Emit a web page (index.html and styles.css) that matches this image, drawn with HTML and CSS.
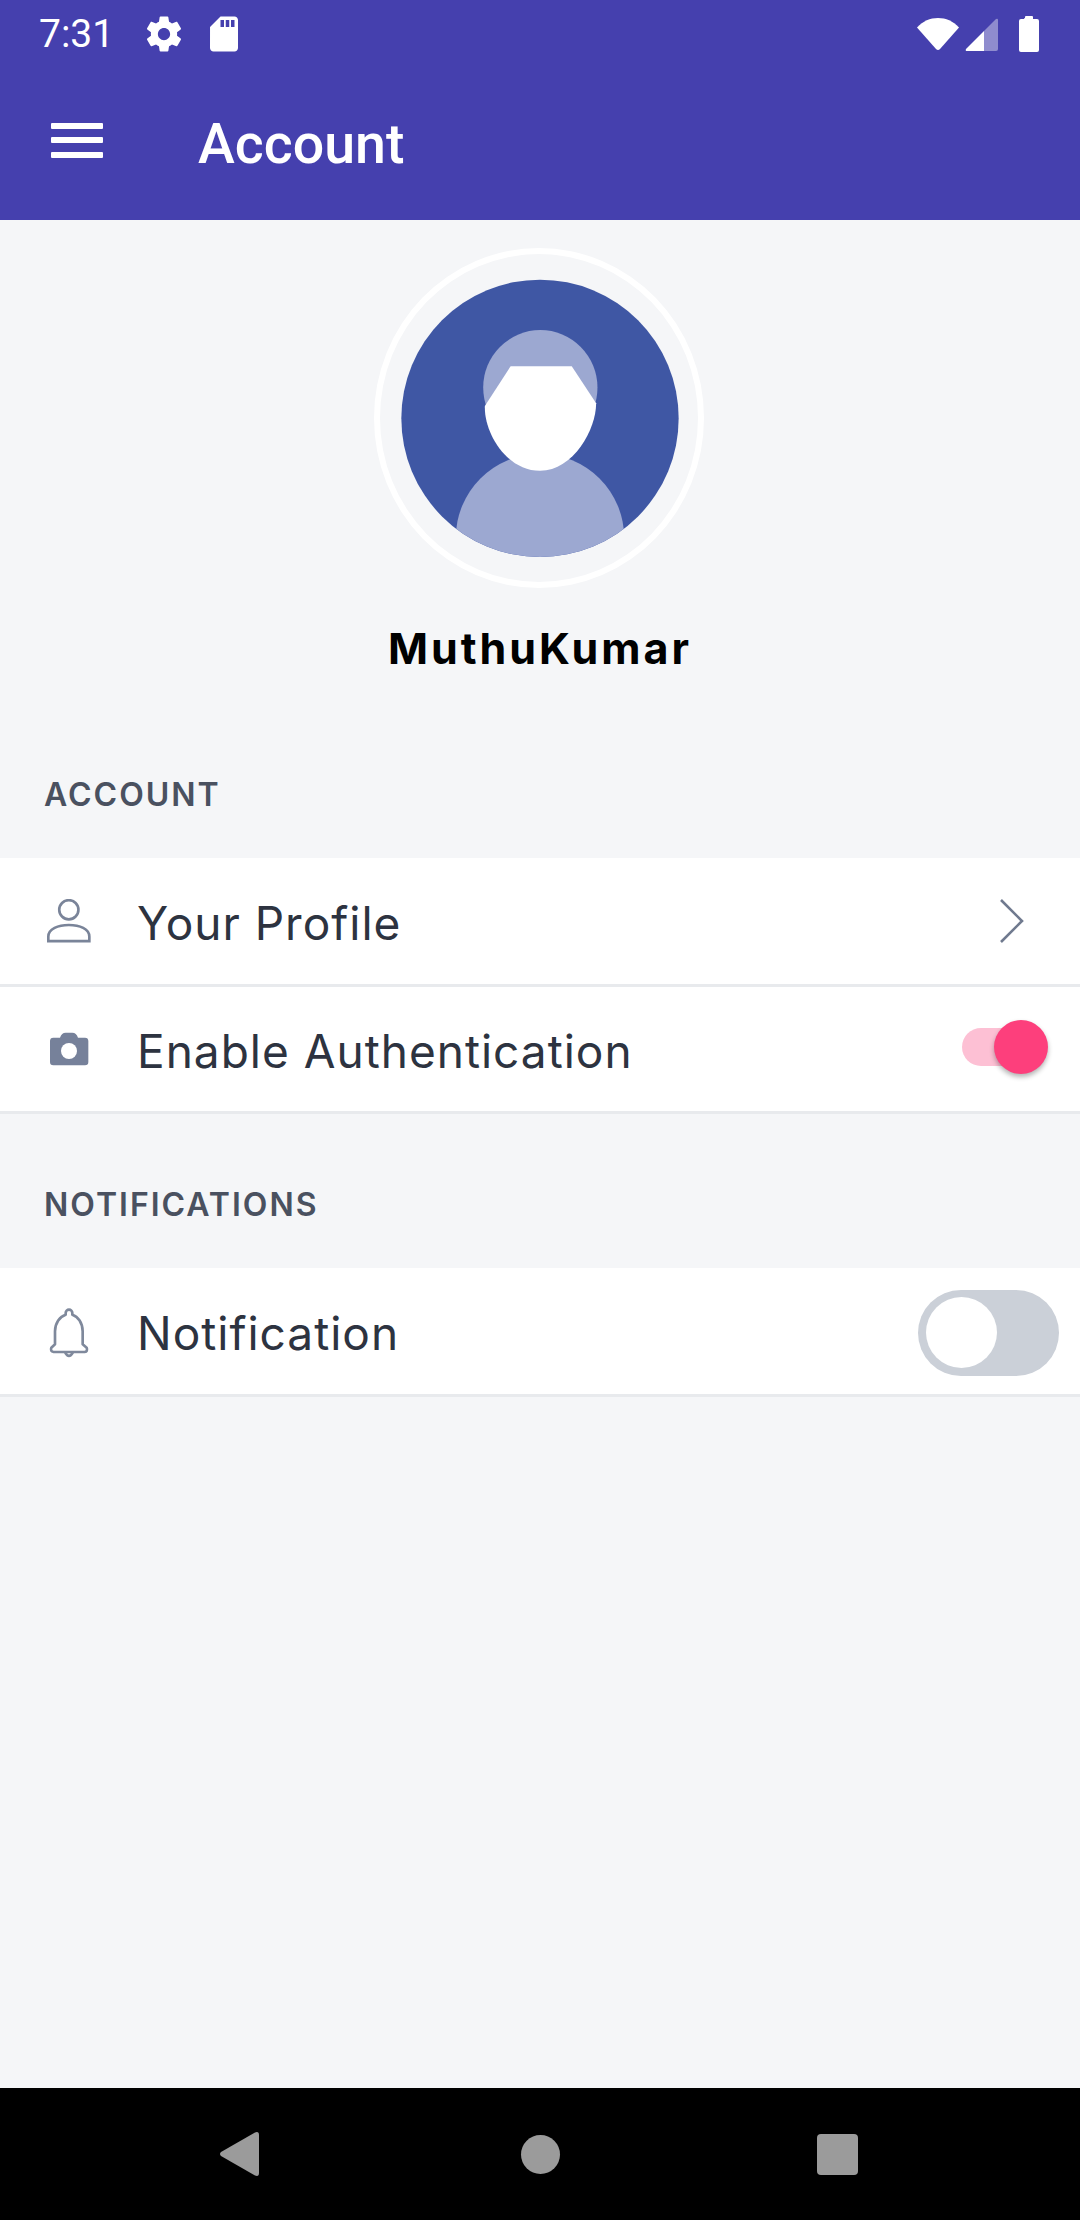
FILE: index.html
```html
<!DOCTYPE html>
<html lang="en">
<head>
<meta charset="utf-8">
<title>Account</title>
<link rel="stylesheet" href="styles.css">
</head>
<body>
<div class="page">
  <header class="header">
    <div class="status">
      <span class="time">7:31</span>
      <svg class="st-gear" viewBox="0 0 24 24"><path fill="#fff" d="M19.43 12.98c.04-.32.07-.64.07-.98s-.03-.66-.07-.98l2.11-1.65c.19-.15.24-.42.12-.64l-2-3.46c-.12-.22-.39-.3-.61-.22l-2.49 1c-.52-.4-1.08-.73-1.69-.98l-.38-2.65C14.46 2.18 14.25 2 14 2h-4c-.25 0-.46.18-.49.42l-.38 2.65c-.61.25-1.17.59-1.69.98l-2.49-1c-.23-.09-.49 0-.61.22l-2 3.46c-.13.22-.07.49.12.64l2.11 1.65c-.04.32-.07.65-.07.98s.03.66.07.98l-2.11 1.65c-.19.15-.24.42-.12.64l2 3.46c.12.22.39.3.61.22l2.49-1c.52.4 1.08.73 1.69.98l.38 2.65c.03.24.24.42.49.42h4c.25 0 .46-.18.49-.42l.38-2.65c.61-.25 1.17-.59 1.69-.98l2.49 1c.23.09.49 0 .61-.22l2-3.46c.12-.22.07-.49-.12-.64l-2.11-1.65zM12 15.5c-1.93 0-3.5-1.57-3.5-3.5s1.57-3.5 3.5-3.5 3.5 1.57 3.5 3.5-1.57 3.5-3.5 3.5z"/></svg>
      <svg class="st-sd" viewBox="0 0 24 24"><path fill="#fff" d="M18 2h-8L4.02 8 4 20c0 1.1.9 2 2 2h12c1.1 0 2-.9 2-2V4c0-1.1-.9-2-2-2zm-6 6h-2V4h2v4zm3 0h-2V4h2v4zm3 0h-2V4h2v4z"/></svg>
      <svg class="st-wifi" viewBox="0 0 42 32"><path fill="#fff" d="M0 9.500C6 3 13 0 21 0s15 3 21 9.500L23 31q-2 2-4 0z"/></svg>
      <svg class="st-cell" viewBox="0 0 33 33"><path fill="#fff" fill-opacity=".4" d="M19 13 31 1q2-1 2 1v29q0 2-2 2H19z"/><path fill="#fff" d="M19 13v20H2q-2 0-1-2z"/></svg>
      <svg class="st-batt" viewBox="0 0 20 36"><path fill="#fff" d="M5 3q0-1 1-1V1q0-1 1-1h6q1 0 1 1v2h4q2 0 2 2v29q0 2-2 2H2q-2 0-2-2V5q0-2 2-2z"/></svg>
    </div>
    <div class="appbar">
      <div class="burger"><span></span><span></span><span></span></div>
      <h1 class="title">Account</h1>
    </div>
  </header>

  <main class="main">
    <section class="profile">
      <div class="ring">
        <svg class="avatar" viewBox="185 150 830 835">
          <defs><clipPath id="disc"><circle cx="600" cy="567" r="415"/></clipPath></defs>
          <circle cx="600" cy="567" r="415" fill="#3f57a4"/>
          <ellipse cx="601" cy="475" rx="171" ry="172" fill="#9ca8d1"/>
          <circle cx="600" cy="925" r="252" fill="#9ca8d1" clip-path="url(#disc)"/>
          <path fill="#fff" d="M512 411H695L768 522C768 600 700 724 600 724C500 724 432 610 435 530Z"/>
        </svg>
      </div>
      <div class="name">MuthuKumar</div>
    </section>

    <section class="group">
      <h2 class="group-label">ACCOUNT</h2>
      <div class="row">
        <svg class="row-icon" viewBox="141 415 133 132"><circle cx="207" cy="447" r="29" fill="none" stroke="#7a8499" stroke-width="8"/><path fill="none" stroke="#7a8499" stroke-width="8" d="M145 542V528C145 505 175 493 207 493C240 493 269 505 269 528V542Z"/></svg>
        <span class="row-text">Your Profile</span>
        <svg class="chevron" viewBox="0 0 24 44"><path fill="none" stroke="#707a8f" stroke-width="2.600" d="M1 1 22 22 1 43"/></svg>
      </div>
      <div class="row">
        <svg class="row-icon" viewBox="141 798 132 132"><path fill="#76819a" d="M160 830H180Q185 815 197 815H217Q229 815 234 830H255Q265 830 265 840V903Q265 913 255 913H160Q150 913 150 903V840Q150 830 160 830Z"/><circle cx="207" cy="870" r="24" fill="#fff"/></svg>
        <span class="row-text">Enable Authentication</span>
        <div class="switch-on"><span class="switch-on-thumb"></span></div>
      </div>
    </section>

    <section class="group group-next">
      <h2 class="group-label">NOTIFICATIONS</h2>
      <div class="row">
        <svg class="row-icon row-icon-tall" viewBox="141 373 132 150"><path fill="none" stroke="#7f899c" stroke-width="8" stroke-linejoin="round" d="M165 482V443C165 418 180 398 197 393V388A10 10 0 0 1 217 388V393C234 398 248 418 248 443V482L260 492Q264 503 254 505H161Q150 503 154 492ZM195 506Q207 527 219 506"/></svg>
        <span class="row-text">Notification</span>
        <div class="switch-off"><span class="switch-off-thumb"></span></div>
      </div>
    </section>
  </main>

  <nav class="navbar">
    <svg class="nav-back" viewBox="0 0 39 44"><path fill="#9b9b9b" d="M1 24Q-1 22 1 20L35 .5Q39-1 39 3V41Q39 45 35 43.500Z"/></svg>
    <span class="nav-home"></span>
    <span class="nav-recent"></span>
  </nav>
</div>
</body>
</html>
```

FILE: styles.css
```css
* { box-sizing: border-box; }
html, body { margin: 0; padding: 0; }
body { width: 1080px; height: 2220px; overflow: hidden; }
.page {
  width: 1080px; height: 2220px;
  display: flex; flex-direction: column;
  background: #f5f6f8;
  font-family: "Inter", "Liberation Sans", sans-serif;
}
.header { background: #4540ae; height: 220px; flex: none; }
.status { height: 68px; display: flex; align-items: center; padding-left: 39px; }
.time { font: 400 39px/1 "Roboto", sans-serif; color: #fff; width: 104px; }
.st-gear { width: 42px; height: 42px; }
.st-sd { width: 42px; height: 42px; margin-left: 18px; }
.st-wifi { width: 42px; height: 32px; margin-left: 672px; margin-top: -1px; }
.st-cell { width: 33px; height: 33px; margin-left: 6px; }
.st-batt { width: 20px; height: 36px; margin-left: 21px; }

.appbar { height: 152px; display: flex; align-items: center; padding: 0 0 6px 51px; }
.burger { width: 52px; display: flex; flex-direction: column; gap: 8.500px; margin-bottom: 2px; }
.burger span { display: block; height: 6px; background: #fff; border-radius: 1px; }
.title { margin: 0 0 0 95px; padding-top: 8px; font: 500 55.500px/1 "Roboto", sans-serif; color: #fff; }

.main { flex: 1; }
.profile { height: 530px; display: flex; flex-direction: column; align-items: center; padding-top: 28px; }
.ring {
  width: 330px; height: 340px;
  border: 6px solid #fff; border-radius: 50%;
  display: flex; align-items: center; justify-content: center;
  margin-left: -3px;
}
.avatar { width: 278px; height: 279px; margin-left: 3px; margin-top: 1px; }
.name { margin-top: 33px; font-size: 43px; line-height: 54px; font-weight: 700; letter-spacing: 3px; color: #000; }

.group-label {
  margin: 0; height: 108px;
  padding: 22px 0 0 44px;
  font-size: 32px; line-height: 46px; font-weight: 600; letter-spacing: 2px; color: #4a5160;
}
.group-next { margin-top: 46px; }
.row {
  height: 127px;
  display: flex; align-items: center;
  background: #fff;
  border-bottom: 3px solid #e8eaed;
  padding-left: 47px;
}
.group .row:first-of-type { height: 129px; }
.row-icon { width: 44px; height: 44px; flex: none; }
.row-icon-tall { height: 50px; margin-top: 3px; }
.row-text { margin-left: 46px; padding-top: 4px; font-size: 46px; line-height: 56px; letter-spacing: 1px; color: #2d3340; }
.chevron { width: 24px; height: 44px; margin-left: auto; margin-right: 56px; }

.switch-on {
  position: relative;
  width: 60px; height: 38px;
  margin-left: auto; margin-right: 58px; margin-top: -4px;
  background: #fdc0d4; border-radius: 19px;
}
.switch-on-thumb {
  position: absolute; left: 32px; top: -8px;
  width: 54px; height: 54px; border-radius: 50%;
  background: #fd3f7c;
  box-shadow: 0 3px 5px rgba(0, 0, 0, .3);
}
.switch-off {
  position: relative;
  width: 141px; height: 86px;
  margin-left: auto; margin-right: 21px; margin-top: 3px;
  background: #cbd0d8; border-radius: 43px;
}
.switch-off-thumb {
  position: absolute; left: 8px; top: 7px;
  width: 71px; height: 71px; border-radius: 50%;
  background: #fff;
}

.navbar { height: 132px; flex: none; background: #000; display: flex; align-items: center; padding-left: 220px; }
.nav-back { width: 39px; height: 44px; }
.nav-home { width: 39px; height: 39px; border-radius: 50%; background: #9b9b9b; margin: 0 257px 0 262px; }
.nav-recent { width: 41px; height: 41px; border-radius: 4px; background: #9b9b9b; }
```
